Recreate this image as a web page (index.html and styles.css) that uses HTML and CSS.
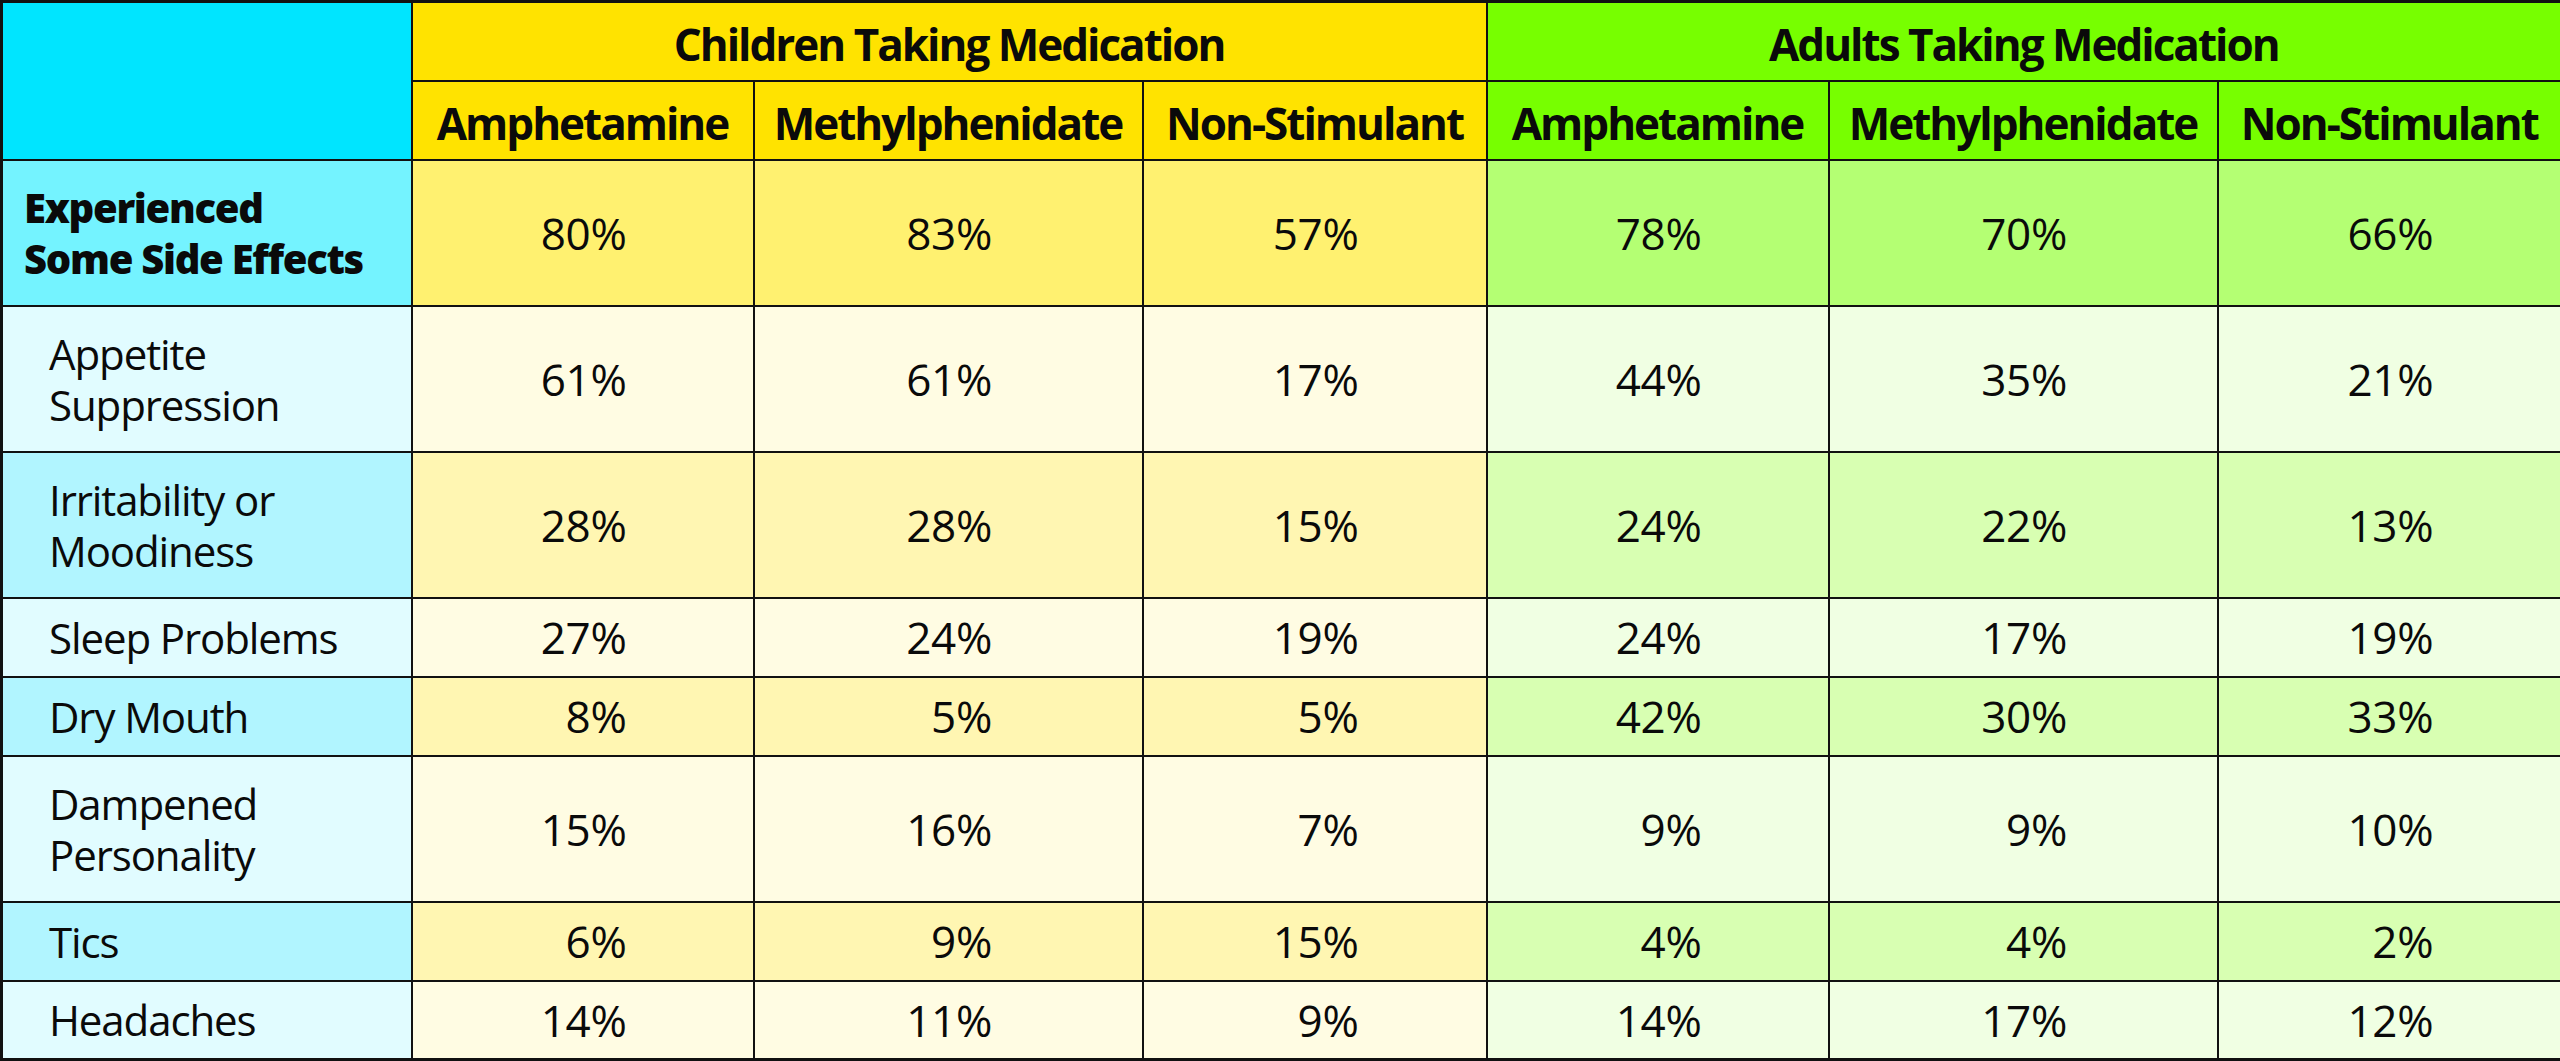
FILE: index.html
```html
<!DOCTYPE html>
<html lang="en">
<head>
<meta charset="utf-8">
<title>ADHD Medication Side Effects</title>
<link rel="stylesheet" href="styles.css">
</head>
<body>
<table class="fx">
  <colgroup>
    <col class="c-label">
    <col class="c-amp"><col class="c-meth"><col class="c-non">
    <col class="c-amp"><col class="c-meth"><col class="c-non">
  </colgroup>
  <thead>
    <tr class="r-group">
      <th class="corner" rowspan="2"></th>
      <th class="g-kid" colspan="3">Children Taking Medication</th>
      <th class="g-adult" colspan="3">Adults Taking Medication</th>
    </tr>
    <tr class="r-sub">
      <th class="g-kid">Amphetamine</th>
      <th class="g-kid">Methylphenidate</th>
      <th class="g-kid">Non-Stimulant</th>
      <th class="g-adult">Amphetamine</th>
      <th class="g-adult">Methylphenidate</th>
      <th class="g-adult">Non-Stimulant</th>
    </tr>
  </thead>
  <tbody>
    <tr class="r-total tall">
      <th class="lab lab-bold">Experienced<br>Some Side Effects</th>
      <td class="kid"><span class="n">80%</span></td>
      <td class="kid"><span class="n">83%</span></td>
      <td class="kid"><span class="n">57%</span></td>
      <td class="adult"><span class="n">78%</span></td>
      <td class="adult"><span class="n">70%</span></td>
      <td class="adult"><span class="n">66%</span></td>
    </tr>
    <tr class="r-light tall">
      <th class="lab">Appetite<br>Suppression</th>
      <td class="kid"><span class="n">61%</span></td>
      <td class="kid"><span class="n">61%</span></td>
      <td class="kid"><span class="n">17%</span></td>
      <td class="adult"><span class="n">44%</span></td>
      <td class="adult"><span class="n">35%</span></td>
      <td class="adult"><span class="n">21%</span></td>
    </tr>
    <tr class="r-mid tall">
      <th class="lab">Irritability or<br>Moodiness</th>
      <td class="kid"><span class="n">28%</span></td>
      <td class="kid"><span class="n">28%</span></td>
      <td class="kid"><span class="n">15%</span></td>
      <td class="adult"><span class="n">24%</span></td>
      <td class="adult"><span class="n">22%</span></td>
      <td class="adult"><span class="n">13%</span></td>
    </tr>
    <tr class="r-light short">
      <th class="lab">Sleep Problems</th>
      <td class="kid"><span class="n">27%</span></td>
      <td class="kid"><span class="n">24%</span></td>
      <td class="kid"><span class="n">19%</span></td>
      <td class="adult"><span class="n">24%</span></td>
      <td class="adult"><span class="n">17%</span></td>
      <td class="adult"><span class="n">19%</span></td>
    </tr>
    <tr class="r-mid short">
      <th class="lab">Dry Mouth</th>
      <td class="kid"><span class="n">8%</span></td>
      <td class="kid"><span class="n">5%</span></td>
      <td class="kid"><span class="n">5%</span></td>
      <td class="adult"><span class="n">42%</span></td>
      <td class="adult"><span class="n">30%</span></td>
      <td class="adult"><span class="n">33%</span></td>
    </tr>
    <tr class="r-light tall">
      <th class="lab">Dampened<br>Personality</th>
      <td class="kid"><span class="n">15%</span></td>
      <td class="kid"><span class="n">16%</span></td>
      <td class="kid"><span class="n">7%</span></td>
      <td class="adult"><span class="n">9%</span></td>
      <td class="adult"><span class="n">9%</span></td>
      <td class="adult"><span class="n">10%</span></td>
    </tr>
    <tr class="r-mid short">
      <th class="lab">Tics</th>
      <td class="kid"><span class="n">6%</span></td>
      <td class="kid"><span class="n">9%</span></td>
      <td class="kid"><span class="n">15%</span></td>
      <td class="adult"><span class="n">4%</span></td>
      <td class="adult"><span class="n">4%</span></td>
      <td class="adult"><span class="n">2%</span></td>
    </tr>
    <tr class="r-light short">
      <th class="lab">Headaches</th>
      <td class="kid"><span class="n">14%</span></td>
      <td class="kid"><span class="n">11%</span></td>
      <td class="kid"><span class="n">9%</span></td>
      <td class="adult"><span class="n">14%</span></td>
      <td class="adult"><span class="n">17%</span></td>
      <td class="adult"><span class="n">12%</span></td>
    </tr>
  </tbody>
</table>
</body>
</html>
```
FILE: styles.css
```css
html, body {
  margin: 0;
  padding: 0;
  background: #ffffff;
}

.fx {
  width: 2560px;
  height: 1061px;
  border-collapse: collapse;
  table-layout: fixed;
  font-family: "Open Sans", "Noto Sans", sans-serif;
  color: #0a0a0a;
  border: 3px solid #111111;
}

.c-label { width: 410px; }
.c-amp { width: 342px; }
.c-meth { width: 389px; }
.c-non { width: 344px; }

.fx th, .fx td {
  border: 2px solid #111111;
  padding: 0;
  vertical-align: middle;
}

/* header */
.r-group, .r-sub { height: 79px; }

.r-group th, .r-sub th {
  font-weight: 740;
  font-size: 44px;
  letter-spacing: -2px;
  text-align: center;
  line-height: 1;
  padding-top: 5px;
}

.corner { background: #00e5ff; }
.g-kid { background: #ffe300; }
.g-adult { background: #77ff00; }

/* body rows */
.tall { height: 146px; }
.short { height: 79px; }

.lab {
  text-align: left;
  font-weight: 400;
  font-size: 42px;
  letter-spacing: -1.1px;
  line-height: 51px;
  padding-left: 46px !important;
}

.lab-bold {
  font-weight: 780;
  font-size: 40px;
  letter-spacing: -1.3px;
  padding-left: 21px !important;
}

.fx td {
  text-align: center;
  font-size: 44px;
  line-height: 1;
  letter-spacing: -0.3px;
}

.n {
  display: inline-block;
  width: 88px;
  text-align: right;
  white-space: nowrap;
}

.r-total .lab { background: #74f3ff; }
.r-total .kid { background: #fff170; }
.r-total .adult { background: #b4ff73; }

.r-light .lab { background: #e1fcff; }
.r-light .kid { background: #fffce3; }
.r-light .adult { background: #f0ffe3; }

.r-mid .lab { background: #b1f5ff; }
.r-mid .kid { background: #fff6b2; }
.r-mid .adult { background: #d8ffb2; }
```
